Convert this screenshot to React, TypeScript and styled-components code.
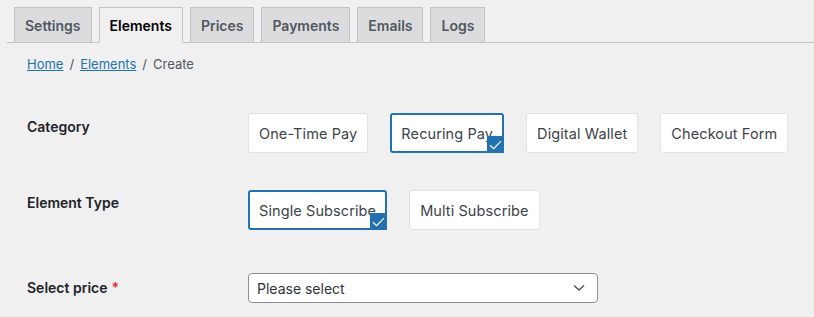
import styled, { createGlobalStyle } from 'styled-components';

const Global = createGlobalStyle`
  html, body {
    margin: 0;
    background: #f0f0f1;
  }
  body {
    font-family: Inter, "Noto Sans", sans-serif;
    color: #3c434a;
    font-size: 13px;
  }
`;

const Page = styled.div`
  display: flex;
  flex-direction: column;
  padding: 7px 0 0 7px;
`;

const TabBar = styled.div`
  display: flex;
  align-items: flex-end;
  gap: 7px;
  padding-left: 7px;
  border-bottom: 1px solid #c3c4c7;
  height: 35px;
`;

const Tab = styled.div<{ $active?: boolean }>`
  display: flex;
  align-items: center;
  height: 34px;
  margin-bottom: -1px;
  padding: 0 10px;
  box-sizing: content-box;
  border: 1px solid #c3c4c7;
  border-bottom: 1px solid ${(p) => (p.$active ? '#f0f0f1' : '#c3c4c7')};
  background: ${(p) => (p.$active ? '#f0f0f1' : '#dcdcde')};
  color: ${(p) => (p.$active ? '#000' : '#50575e')};
  font-size: 14px;
  font-weight: 600;
`;

const Crumbs = styled.div`
  display: flex;
  gap: 6px;
  padding-left: 20px;
  margin-top: 12px;
  line-height: 18px;
  font-size: 13px;
  color: #50575e;
  & a {
    color: #2271b1;
    text-decoration: underline;
  }
`;

const Form = styled.div`
  display: flex;
  flex-direction: column;
  padding-left: 20px;
`;

const Row = styled.div<{ $top: number; $center?: boolean }>`
  display: grid;
  grid-template-columns: 221px 1fr;
  align-items: ${(p) => (p.$center ? 'center' : 'start')};
  margin-top: ${(p) => p.$top}px;
`;

const Label = styled.div<{ $pad?: number }>`
  padding-top: ${(p) => p.$pad ?? 0}px;
  font-size: 14px;
  font-weight: 600;
  line-height: 18px;
  color: #1d2327;
`;

const Required = styled.span`
  color: #d63638;
  margin-left: 4px;
`;

const Options = styled.div`
  display: flex;
  gap: 22px;
`;

const Card = styled.div<{ $selected?: boolean }>`
  position: relative;
  display: flex;
  align-items: center;
  height: 40px;
  box-sizing: border-box;
  padding: 0 ${(p) => (p.$selected ? 9 : 10)}px;
  background: #fff;
  border: ${(p) => (p.$selected ? '2px solid #2271b1' : '1px solid #e2e2e4')};
  border-radius: 3px;
  font-size: 14.5px;
  letter-spacing: 0.1px;
  color: #3c434a;
  white-space: nowrap;
`;

const Check = styled.span`
  position: absolute;
  right: -2px;
  bottom: -2px;
  width: 17px;
  height: 17px;
  background: #2271b1;
  display: flex;
  align-items: center;
  justify-content: center;
`;

const Select = styled.div`
  display: flex;
  align-items: center;
  justify-content: space-between;
  width: 350px;
  height: 30px;
  box-sizing: border-box;
  padding: 0 12px 0 8px;
  background: #fff;
  border: 1px solid #8c8f94;
  border-radius: 4px;
  font-size: 14px;
  color: #2c3338;
`;

function Tick() {
  return (
    <svg width="13" height="10" viewBox="0 0 13 10" fill="none">
      <path d="M1 5.2 L4.6 8.6 L12 1.2" stroke="#fff" strokeWidth="1.2" />
    </svg>
  );
}

function OptionCard({ label, selected }: { label: string; selected?: boolean }) {
  return (
    <Card $selected={selected}>
      {label}
      {selected && (
        <Check>
          <Tick />
        </Check>
      )}
    </Card>
  );
}

export default function App() {
  const tabs = ['Settings', 'Elements', 'Prices', 'Payments', 'Emails', 'Logs'];
  return (
    <Page>
      <Global />
      <TabBar>
        {tabs.map((t) => (
          <Tab key={t} $active={t === 'Elements'}>
            {t}
          </Tab>
        ))}
      </TabBar>
      <Crumbs>
        <a href="#">Home</a>
        <span>/</span>
        <a href="#">Elements</a>
        <span>/</span>
        <span>Create</span>
      </Crumbs>
      <Form>
        <Row $top={40}>
          <Label $pad={5}>Category</Label>
          <Options>
            <OptionCard label="One-Time Pay" />
            <OptionCard label="Recuring Pay" selected />
            <OptionCard label="Digital Wallet" />
            <OptionCard label="Checkout Form" />
          </Options>
        </Row>
        <Row $top={37}>
          <Label $pad={4}>Element Type</Label>
          <Options>
            <OptionCard label="Single Subscribe" selected />
            <OptionCard label="Multi Subscribe" />
          </Options>
        </Row>
        <Row $top={43} $center>
          <Label>
            Select price<Required>*</Required>
          </Label>
          <Select>
            <span>Please select</span>
            <svg width="12" height="8" viewBox="0 0 12 8" fill="none">
              <path d="M1 1.5 L6 6 L11 1.5" stroke="#50575e" strokeWidth="1.6" />
            </svg>
          </Select>
        </Row>
      </Form>
    </Page>
  );
}
